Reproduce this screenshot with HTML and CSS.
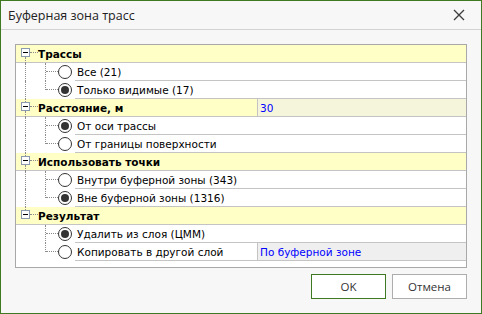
FILE: index.html
```html
<!DOCTYPE html>
<html lang="ru">
<head>
  <meta charset="UTF-8" />
  <title>Буферная зона трасс</title>
  <link rel="stylesheet" href="styles.css">
</head>
<body>
  <div class="window">
    <div class="titlebar">
      <span class="title">Буферная зона трасс</span>
      <svg class="close" width="12" height="12" viewBox="0 0 12 12">
        <path d="M1 1 L11 11 M11 1 L1 11" stroke="#3c3c3c" stroke-width="1.3" fill="none"/>
      </svg>
    </div>

    <div class="content">
      <div class="grid">
        <!-- Трассы -->
        <div class="row cat first">
          <div class="tree"><span class="box"></span></div>
          <div class="name">Трассы</div>
        </div>
        <div class="row item">
          <div class="tree"><i class="v-root"></i><i class="v-branch"></i><span class="radio"></span></div>
          <div class="name">Все (21)</div>
          <div class="value"></div>
        </div>
        <div class="row item last">
          <div class="tree"><i class="v-root"></i><i class="v-branch"></i><span class="radio checked"></span></div>
          <div class="name">Только видимые (17)</div>
          <div class="value"></div>
        </div>

        <!-- Расстояние -->
        <div class="row cat">
          <div class="tree"><span class="box"></span></div>
          <div class="name">Расстояние, м</div>
          <div class="value num">30</div>
        </div>
        <div class="row item">
          <div class="tree"><i class="v-root"></i><i class="v-branch"></i><span class="radio checked"></span></div>
          <div class="name">От оси трассы</div>
          <div class="value"></div>
        </div>
        <div class="row item last">
          <div class="tree"><i class="v-root"></i><i class="v-branch"></i><span class="radio"></span></div>
          <div class="name">От границы поверхности</div>
          <div class="value"></div>
        </div>

        <!-- Использовать точки -->
        <div class="row cat">
          <div class="tree"><span class="box"></span></div>
          <div class="name">Использовать точки</div>
        </div>
        <div class="row item">
          <div class="tree"><i class="v-root"></i><i class="v-branch"></i><span class="radio"></span></div>
          <div class="name">Внутри буферной зоны (343)</div>
          <div class="value"></div>
        </div>
        <div class="row item last">
          <div class="tree"><i class="v-root"></i><i class="v-branch"></i><span class="radio checked"></span></div>
          <div class="name">Вне буферной зоны (1316)</div>
          <div class="value"></div>
        </div>

        <!-- Результат -->
        <div class="row cat final">
          <div class="tree"><span class="box"></span></div>
          <div class="name">Результат</div>
        </div>
        <div class="row item tail">
          <div class="tree"><i class="v-branch"></i><span class="radio checked"></span></div>
          <div class="name">Удалить из слоя (ЦММ)</div>
          <div class="value"></div>
        </div>
        <div class="row item tail last">
          <div class="tree"><i class="v-branch"></i><span class="radio"></span></div>
          <div class="name">Копировать в другой слой</div>
          <div class="value link">По буферной зоне</div>
        </div>
      </div>

      <div class="buttons">
        <button class="btn default">OK</button>
        <button class="btn">Отмена</button>
      </div>
    </div>
  </div>
</body>
</html>
```

FILE: styles.css
```css
* {
  margin: 0;
  padding: 0;
  box-sizing: border-box;
}

body {
  background: #f7f7f7;
}

.window {
  width: 482px;
  height: 314px;
  border: 1px solid #3f7a22;
  background: #f7f7f7;
  display: flex;
  flex-direction: column;
}

/* Title bar */
.titlebar {
  height: 29px;
  border-bottom: 1px solid #d2d2d2;
  display: flex;
  align-items: center;
  justify-content: space-between;
  padding: 0 16px 0 7px;
}

.title {
  font-family: 'Open Sans', sans-serif;
  font-size: 12.5px;
  color: #222;
}

.close {
  display: block;
}

.content {
  flex: 1;
  padding: 14px 14px 0 14px;
}

/* Property grid */
.grid {
  height: 224px;
  border: 1px solid #a8a8a8;
  background: #fff;
  font-family: 'DejaVu Sans', sans-serif;
  font-size: 10.5px;
  color: #000;
}

.row {
  display: flex;
  height: 18px;
}

.row .tree {
  position: relative;
  flex: none;
  height: 100%;
}

.row .name {
  display: flex;
  align-items: center;
  white-space: nowrap;
}

.row .value {
  flex: 1;
  display: flex;
  align-items: center;
  padding-left: 2px;
}

/* Category rows */
.cat {
  background: #ffffc6;
  border-bottom: 1px solid #c4c4c4;
}

.cat .tree {
  width: 22px;
}

.cat .name {
  width: 219px;
  font-weight: bold;
}

.cat .value {
  border-left: 1px solid #c4c4c4;
}

.box {
  position: absolute;
  left: 5px;
  top: 3px;
  width: 9px;
  height: 9px;
  border: 1px solid #8a9bb0;
  background: #fff;
}

.box::after {
  content: "";
  position: absolute;
  left: 1px;
  top: 3px;
  width: 5px;
  height: 1px;
  background: #000;
}

/* vertical line above the expander box, and the stub to the text */
.cat .tree::before {
  content: "";
  position: absolute;
  left: 9px;
  top: 0;
  height: 3px;
  border-left: 1px dotted #8c8c8c;
}

.cat.first .tree::before {
  display: none;
}

.cat .tree::after {
  content: "";
  position: absolute;
  left: 14px;
  top: 7px;
  width: 8px;
  border-top: 1px dotted #8c8c8c;
}

/* vertical line below the box, down to the next category */
.cat:not(.final) .box::before {
  content: "";
  position: absolute;
  left: 3px;
  top: 8px;
  height: 6px;
  border-left: 1px dotted #8c8c8c;
}

/* Item rows */
.item .tree {
  width: 59px;
}

.item .name,
.item .value {
  border-bottom: 1px solid #c4c4c4;
}

.item .name {
  width: 182px;
  padding-left: 2px;
}

.v-root {
  position: absolute;
  left: 9px;
  top: 0;
  bottom: 0;
  border-left: 1px dotted #8c8c8c;
}

.v-branch {
  position: absolute;
  left: 29px;
  top: 0;
  bottom: 0;
  border-left: 1px dotted #8c8c8c;
}

.last .v-branch {
  bottom: auto;
  height: 9px;
}

.v-branch::after {
  content: "";
  position: absolute;
  left: 0;
  top: 8px;
  width: 12px;
  border-top: 1px dotted #8c8c8c;
}

.radio {
  position: absolute;
  left: 42px;
  top: 2px;
  width: 14px;
  height: 14px;
  border: 1px solid #333;
  border-radius: 50%;
  background: #fff;
}

.radio.checked::after {
  content: "";
  position: absolute;
  left: 2px;
  top: 2px;
  width: 8px;
  height: 8px;
  border-radius: 50%;
  background: #333;
}

.value.num {
  background: #f5f5dc;
  color: #0000ff;
}

.value.link {
  background: #efefef;
  color: #0000ff;
  border-left: 1px solid #c4c4c4;
}

/* Buttons */
.buttons {
  display: flex;
  justify-content: flex-end;
  gap: 6px;
  margin-top: 6px;
}

.btn {
  width: 75px;
  height: 25px;
  background: #fff;
  border: 1px solid #adadad;
  font-family: 'Open Sans', sans-serif;
  font-size: 11.5px;
  color: #333;
}

.btn.default {
  border-color: #3f7a22;
}
```
